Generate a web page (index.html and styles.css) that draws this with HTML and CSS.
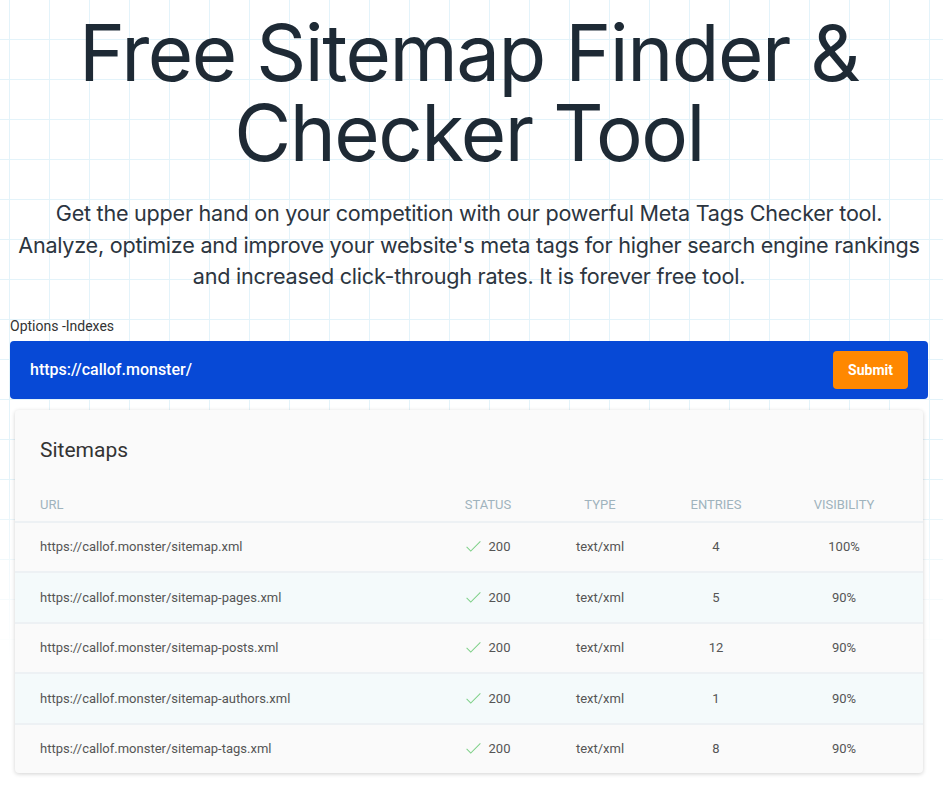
FILE: index.html
```html
<!DOCTYPE html>
<html lang="en">
<head>
<meta charset="utf-8">
<title>Free Sitemap Finder &amp; Checker Tool</title>
<link rel="stylesheet" href="styles.css">
</head>
<body>
<main class="page">
  <header class="hero">
    <h1 class="hero-title">Free Sitemap Finder &amp;<br>Checker Tool</h1>
    <p class="hero-sub">Get the upper hand on your competition with our powerful Meta Tags Checker tool.<br>Analyze, optimize and improve your website's meta tags for higher search engine rankings<br>and increased click-through rates. It is forever free tool.</p>
  </header>

  <section class="tool">
    <div class="options">Options -Indexes</div>
    <form class="url-bar">
      <span class="url-text">https://callof.monster/</span>
      <button type="button" class="submit">Submit</button>
    </form>

    <div class="card">
      <h2 class="card-title">Sitemaps</h2>
      <div class="table">
        <div class="row head">
          <div class="c-url">URL</div>
          <div class="c-mid">Status</div>
          <div class="c-mid">Type</div>
          <div class="c-mid">Entries</div>
          <div class="c-mid">Visibility</div>
        </div>
        <div class="row">
          <div class="c-url">https://callof.monster/sitemap.xml</div>
          <div class="c-mid status"><svg class="check" viewBox="0 0 16 12"><polyline points="0.5,6.5 5,11 15.5,0.5"/></svg>200</div>
          <div class="c-mid">text/xml</div>
          <div class="c-mid">4</div>
          <div class="c-mid">100%</div>
        </div>
        <div class="row alt">
          <div class="c-url">https://callof.monster/sitemap-pages.xml</div>
          <div class="c-mid status"><svg class="check" viewBox="0 0 16 12"><polyline points="0.5,6.5 5,11 15.5,0.5"/></svg>200</div>
          <div class="c-mid">text/xml</div>
          <div class="c-mid">5</div>
          <div class="c-mid">90%</div>
        </div>
        <div class="row">
          <div class="c-url">https://callof.monster/sitemap-posts.xml</div>
          <div class="c-mid status"><svg class="check" viewBox="0 0 16 12"><polyline points="0.5,6.5 5,11 15.5,0.5"/></svg>200</div>
          <div class="c-mid">text/xml</div>
          <div class="c-mid">12</div>
          <div class="c-mid">90%</div>
        </div>
        <div class="row alt">
          <div class="c-url">https://callof.monster/sitemap-authors.xml</div>
          <div class="c-mid status"><svg class="check" viewBox="0 0 16 12"><polyline points="0.5,6.5 5,11 15.5,0.5"/></svg>200</div>
          <div class="c-mid">text/xml</div>
          <div class="c-mid">1</div>
          <div class="c-mid">90%</div>
        </div>
        <div class="row">
          <div class="c-url">https://callof.monster/sitemap-tags.xml</div>
          <div class="c-mid status"><svg class="check" viewBox="0 0 16 12"><polyline points="0.5,6.5 5,11 15.5,0.5"/></svg>200</div>
          <div class="c-mid">text/xml</div>
          <div class="c-mid">8</div>
          <div class="c-mid">90%</div>
        </div>
      </div>
    </div>
  </section>
</main>
</body>
</html>
```
FILE: styles.css
```css
html, body {
  margin: 0;
  padding: 0;
}
body {
  font-family: Roboto, "Liberation Sans", sans-serif;
  color: #333;
  background-color: #fff;
  background-image:
    linear-gradient(to bottom, rgba(255,255,255,0) 0, rgba(255,255,255,0) 470px, #fff 660px),
    linear-gradient(to right, #e3f3fa 1px, transparent 1px),
    linear-gradient(to bottom, #e3f3fa 1px, transparent 1px);
  background-size: 100% 100%, 40px 40px, 40px 40px;
  background-position: 0 0, 9px 39px, 9px 39px;
  background-repeat: no-repeat, repeat, repeat;
  min-height: 798px;
}
.page {
  padding: 0 15px 0 10px;
}
.hero {
  text-align: center;
}
.hero-title {
  margin: 0;
  padding-top: 13px;
  font-family: Inter, "DejaVu Sans", sans-serif;
  font-weight: 400;
  font-size: 78px;
  line-height: 80px;
  letter-spacing: -1.5px;
  color: #1e2a35;
}
.hero-sub {
  margin: 25px -10px 0;
  white-space: nowrap;
  font-family: Inter, "Liberation Sans", sans-serif;
  font-weight: 400;
  font-size: 21.6px;
  line-height: 31.5px;
  letter-spacing: -0.25px;
  color: #2c3540;
}
.tool {
  margin-top: 24px;
}
.options {
  font-size: 14px;
  line-height: 18px;
  color: #333;
}
.url-bar {
  margin: 6px 0 0;
  height: 58px;
  box-sizing: border-box;
  background: #0749d6;
  border-radius: 4px;
  display: flex;
  align-items: center;
  justify-content: space-between;
  padding: 0 20px 0 20px;
}
.url-text {
  color: #fff;
  font-size: 16px;
  font-weight: 500;
}
.submit {
  font-family: Roboto, "Liberation Sans", sans-serif;
  background: #ff8800;
  color: #fff;
  border: 0;
  border-radius: 4px;
  height: 38px;
  width: 75px;
  font-size: 14px;
  font-weight: 700;
  padding: 0;
}
.card {
  margin: 11px 5px 0;
  background: #fafafa;
  border-radius: 4px;
  box-shadow: 0 1px 4px rgba(0,0,0,0.18);
  overflow: hidden;
}
.card-title {
  margin: 0;
  padding: 28px 25px 0;
  font-size: 21px;
  line-height: 24px;
  font-weight: 400;
  color: #333;
}
.row {
  display: grid;
  grid-template-columns: 1fr 112px 112px 120px 136px;
  padding: 0 11px 0 25px;
  height: 48.5px;
  align-items: center;
  border-top: 2px solid #edf1f4;
  font-size: 13px;
  color: #555;
}
.row.head {
  border-top: 0;
  height: 59px;
  align-items: end;
  padding-bottom: 9px;
  box-sizing: border-box;
  font-size: 13px;
  text-transform: uppercase;
  color: #9fb3bd;
}
.row.alt {
  background: #f4fafb;
}
.c-mid {
  text-align: center;
}
.status {
  display: flex;
  align-items: center;
  justify-content: center;
  gap: 8px;
}
.check {
  width: 15px;
  height: 11px;
  fill: none;
  stroke: #7ccf86;
  stroke-width: 1.1;
}
```
